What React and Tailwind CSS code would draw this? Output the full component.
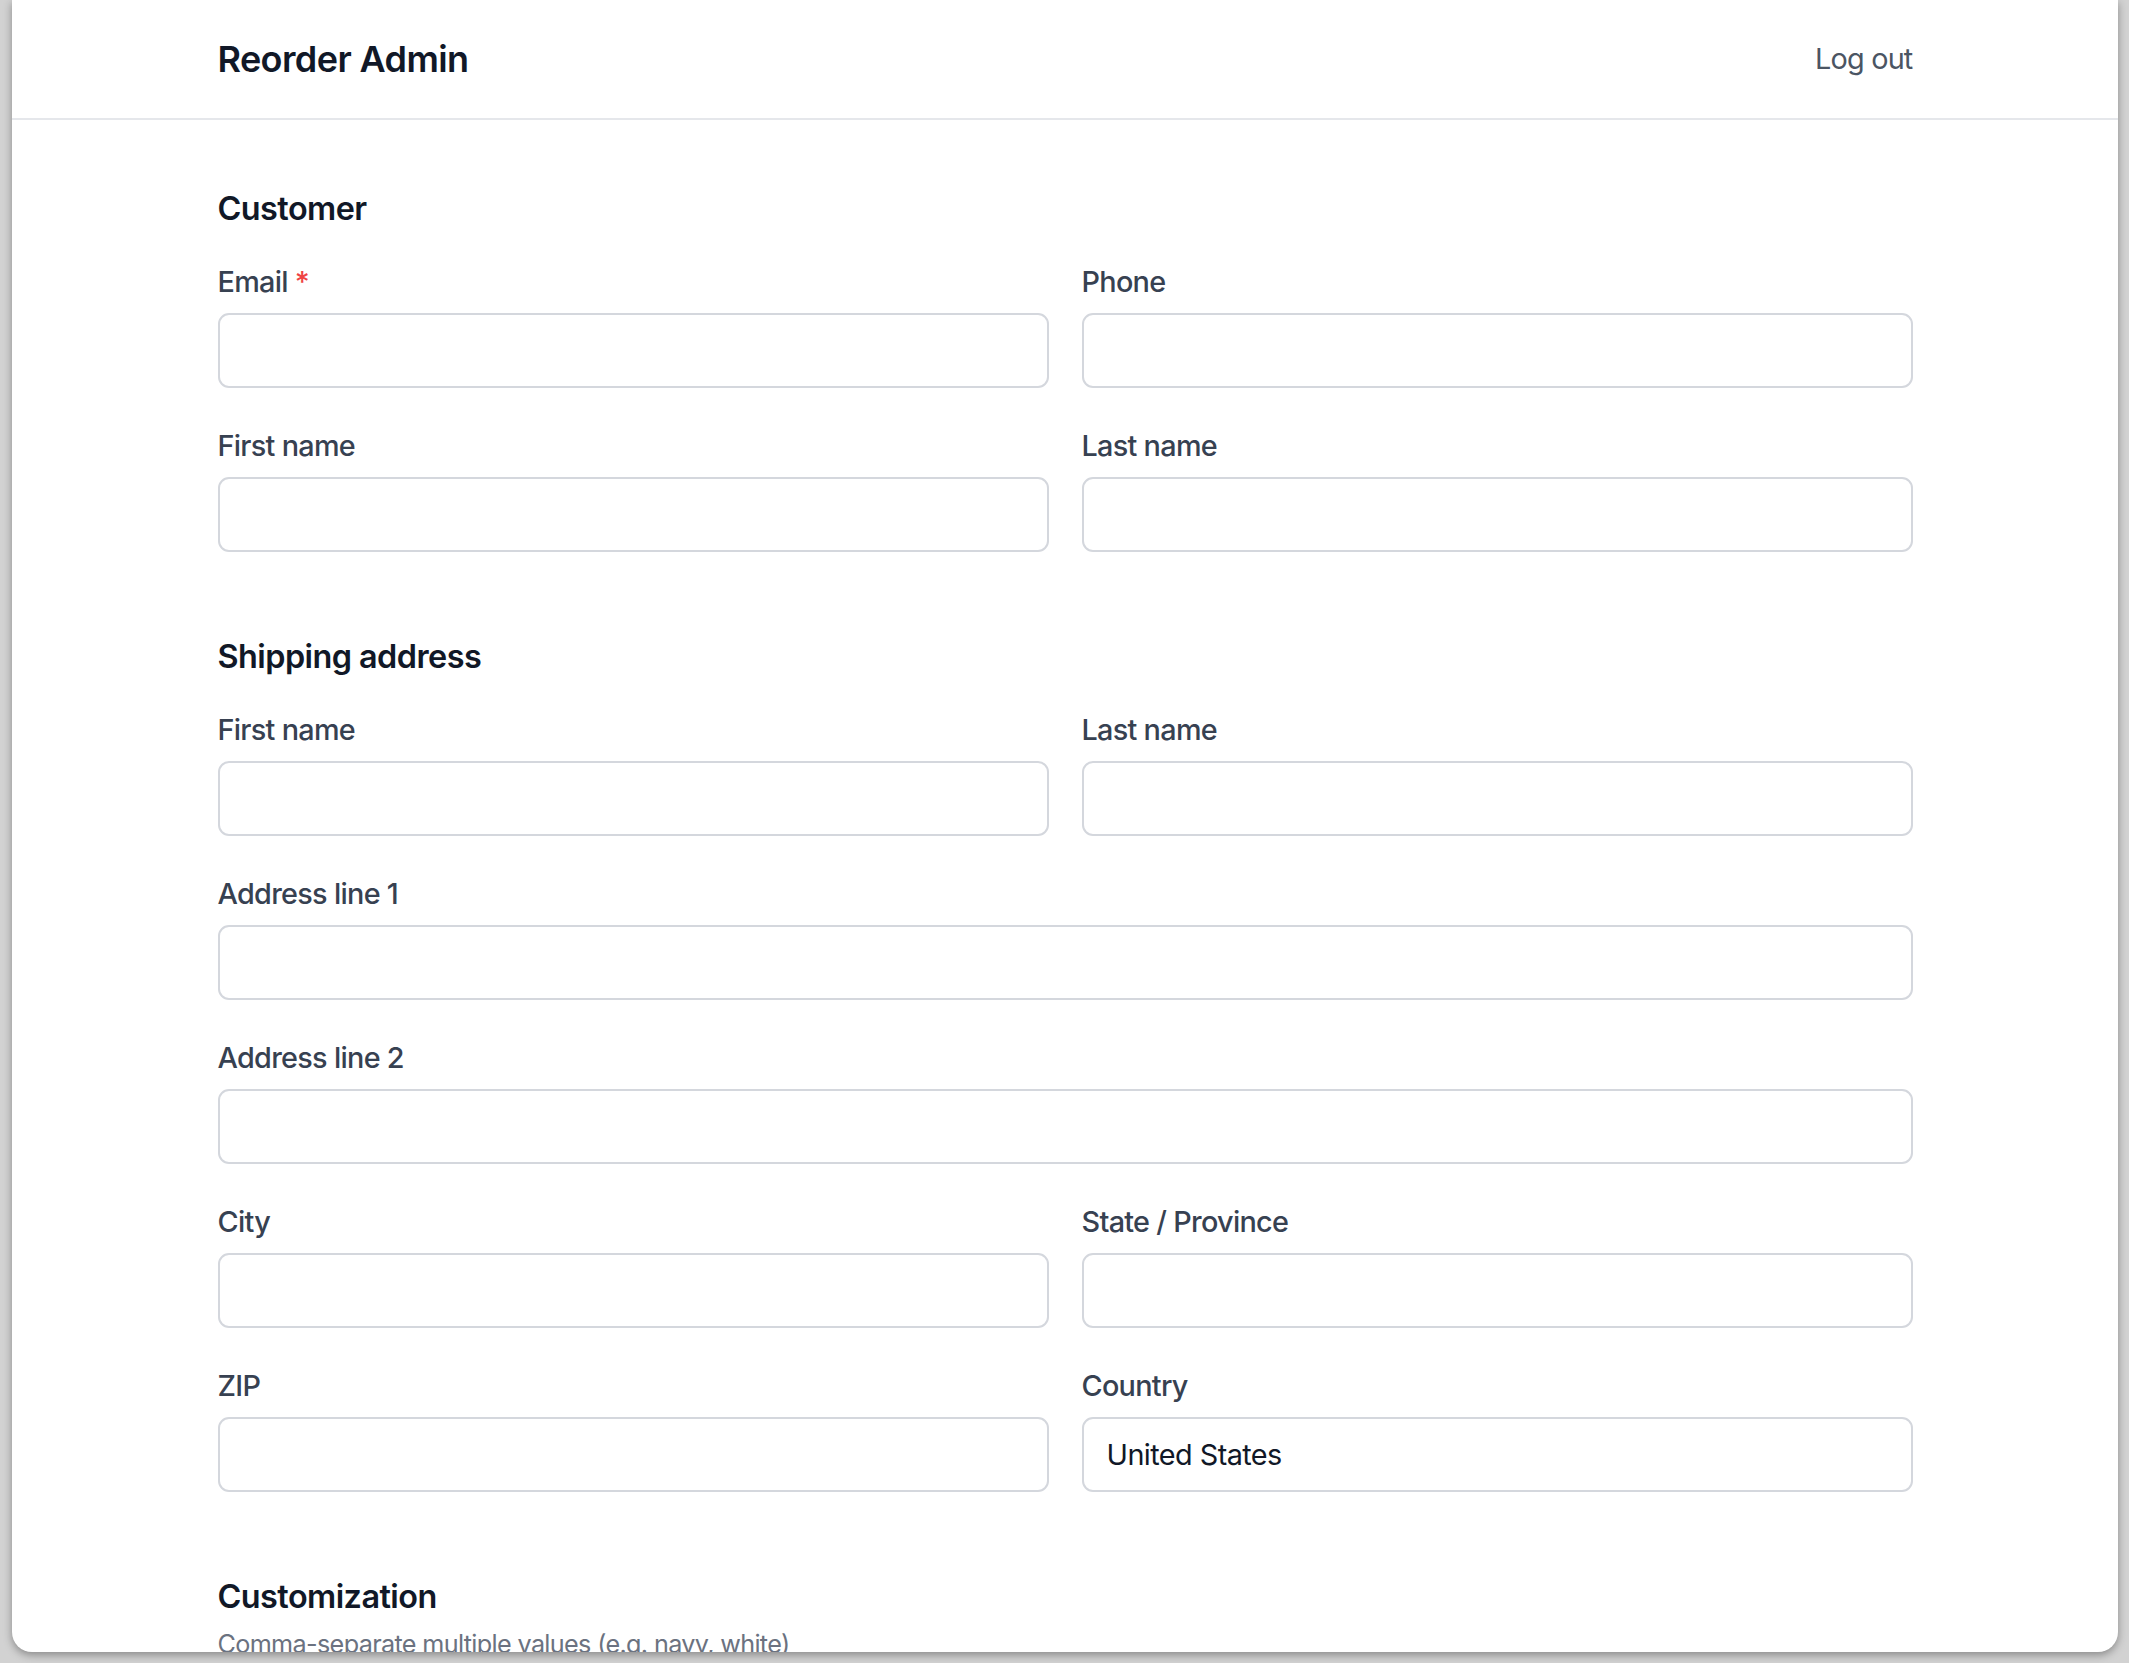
import React from "react";

const font = { fontFamily: "Inter, 'Noto Sans', 'Liberation Sans', sans-serif" };

function Field({ label, required, value, full }) {
  return (
    <div className={full ? "col-span-2 flex flex-col" : "flex flex-col"}>
      <label className="block text-[28.8px] leading-[43px] font-medium tracking-[-0.7px] text-[#374151] mb-[10px]">
        {label}
        {required && <span className="text-[#ef4444]"> *</span>}
      </label>
      <input
        type="text"
        defaultValue={value || ""}
        className="h-[75px] w-full rounded-[11px] border-2 border-[#d4d7dd] bg-white pl-[23px] pr-[22px] text-[28.8px] tracking-[-0.55px] text-[#111827] outline-none"
        style={font}
      />
    </div>
  );
}

function Section({ title, children, first }) {
  return (
    <section className={first ? "" : "mt-[80px]"}>
      <h2 className="text-[32.4px] leading-[50px] font-semibold tracking-[-0.55px] text-[#111827] mb-[26px]">{title}</h2>
      <div className="grid grid-cols-2 gap-x-[33px] gap-y-[36px]">{children}</div>
    </section>
  );
}

export default function App() {
  return (
    <div className="h-[1663px] w-full overflow-hidden bg-[#d2d2d2] pl-[12px] pr-[11px]" style={font}>
      <div className="relative h-[1652px] overflow-hidden rounded-b-[20px] bg-white shadow-[0_3px_8px_rgba(0,0,0,0.35)]">
        <header className="h-[120px] border-b-2 border-[#e5e7eb]">
          <div className="mx-auto flex h-full w-[1695px] items-center justify-between">
            <div className="text-[36px] font-semibold text-[#111827] tracking-[-0.6px]">Reorder Admin</div>
            <button className="text-[28.8px] tracking-[-0.8px] text-[#4b5563]">Log out</button>
          </div>
        </header>
        <main className="mx-auto w-[1695px] pt-[64px]">
          <Section title="Customer" first>
            <Field label="Email" required />
            <Field label="Phone" />
            <Field label="First name" />
            <Field label="Last name" />
          </Section>
          <Section title="Shipping address">
            <Field label="First name" />
            <Field label="Last name" />
            <Field label="Address line 1" full />
            <Field label="Address line 2" full />
            <Field label="City" />
            <Field label="State / Province" />
            <Field label="ZIP" />
            <Field label="Country" value="United States" />
          </Section>
          <section className="mt-[80px]">
            <h2 className="text-[32.4px] leading-[50px] font-semibold tracking-[-0.55px] text-[#111827]">Customization</h2>
            <p className="mt-[4px] text-[25.2px] leading-[36px] tracking-[-0.65px] text-[#6b7280]">
              Comma-separate multiple values (e.g. navy, white)
            </p>
          </section>
        </main>
      </div>
    </div>
  );
}
